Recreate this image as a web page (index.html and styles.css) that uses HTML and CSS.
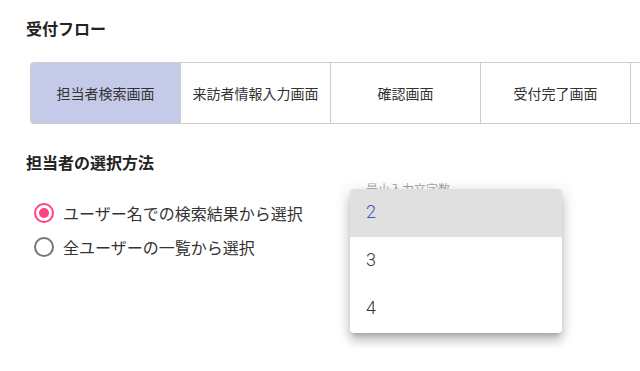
FILE: index.html
```html
<!DOCTYPE html>
<html lang="ja">
<head>
<meta charset="utf-8">
<link rel="stylesheet" href="styles.css">
</head>
<body>
<div class="page">
  <h1 class="title">受付フロー</h1>
  <div class="tabs">
    <div class="tab active">担当者検索画面</div>
    <div class="tab">来訪者情報入力画面</div>
    <div class="tab">確認画面</div>
    <div class="tab">受付完了画面</div>
    <div class="tab"></div>
  </div>
  <h2 class="title sub">担当者の選択方法</h2>
  <div class="choice-row">
    <div class="radios">
      <label class="radio checked"><span class="circle"><span class="dot"></span></span><span class="rlabel">ユーザー名での検索結果から選択</span></label>
      <label class="radio"><span class="circle"></span><span class="rlabel">全ユーザーの一覧から選択</span></label>
    </div>
    <div class="field">
      <div class="flabel">最小入力文字数</div>
      <div class="menu">
        <div class="item selected">2</div>
        <div class="item">3</div>
        <div class="item">4</div>
      </div>
    </div>
  </div>
</div>
</body>
</html>
```
FILE: styles.css
```css
html, body {
  margin: 0;
  padding: 0;
  background: #fff;
}
body {
  font-family: "Noto Sans CJK JP", "Noto Sans", sans-serif;
  color: rgba(0, 0, 0, 0.87);
}
.page {
  width: 640px;
  height: 371px;
  overflow: hidden;
  padding: 16px 0 0 26px;
  box-sizing: border-box;
}
.title {
  margin: 0;
  font-size: 16px;
  font-weight: 700;
  line-height: 24px;
  color: #222;
}
.sub {
  margin-top: 26px;
}
.tabs {
  display: flex;
  margin: 22px 0 0 4px;
  height: 62px;
  box-sizing: border-box;
  border: 1px solid #cccccc;
  border-right: none;
  border-radius: 4px 0 0 4px;
  width: 800px;
}
.tab {
  flex: 0 0 150px;
  box-sizing: border-box;
  border-right: 1px solid #cccccc;
  display: flex;
  align-items: center;
  justify-content: center;
  font-size: 14px;
  color: #333;
}
.tab.active {
  background: #c5cae9;
  border-radius: 3px 0 0 3px;
}
.choice-row {
  display: flex;
}
.radios {
  width: 316px;
  padding: 22px 0 0 8px;
  display: flex;
  flex-direction: column;
}
.radio {
  display: flex;
  align-items: center;
  height: 34px;
  font-size: 16px;
  color: #333;
}
.circle {
  width: 20px;
  height: 20px;
  box-sizing: border-box;
  border: 2px solid #757575;
  border-radius: 50%;
  display: flex;
  align-items: center;
  justify-content: center;
  margin-right: 9px;
}
.checked .circle {
  border-color: #ff4081;
}
.dot {
  width: 10px;
  height: 10px;
  border-radius: 50%;
  background: #ff4081;
}
.field {
  position: relative;
  width: 212px;
  padding: 8px 0 0 16px;
}
.flabel {
  font-size: 12px;
  line-height: 14px;
  color: rgba(0, 0, 0, 0.38);
}
.menu {
  position: absolute;
  left: 0;
  top: 15px;
  width: 212px;
  background: #fff;
  border-radius: 4px;
  overflow: hidden;
  box-shadow: 0 5px 5px -3px rgba(0,0,0,0.2), 0 8px 10px 1px rgba(0,0,0,0.14), 0 3px 14px 2px rgba(0,0,0,0.12);
}
.item {
  height: 48px;
  box-sizing: border-box;
  padding: 0 0 4px 16px;
  display: flex;
  align-items: center;
  font-family: "Roboto", "Noto Sans CJK JP", sans-serif;
  font-size: 18px;
  font-weight: 300;
  color: #333;
}
.item.selected {
  background: #e0e0e0;
  color: #3f51b5;
}
```
